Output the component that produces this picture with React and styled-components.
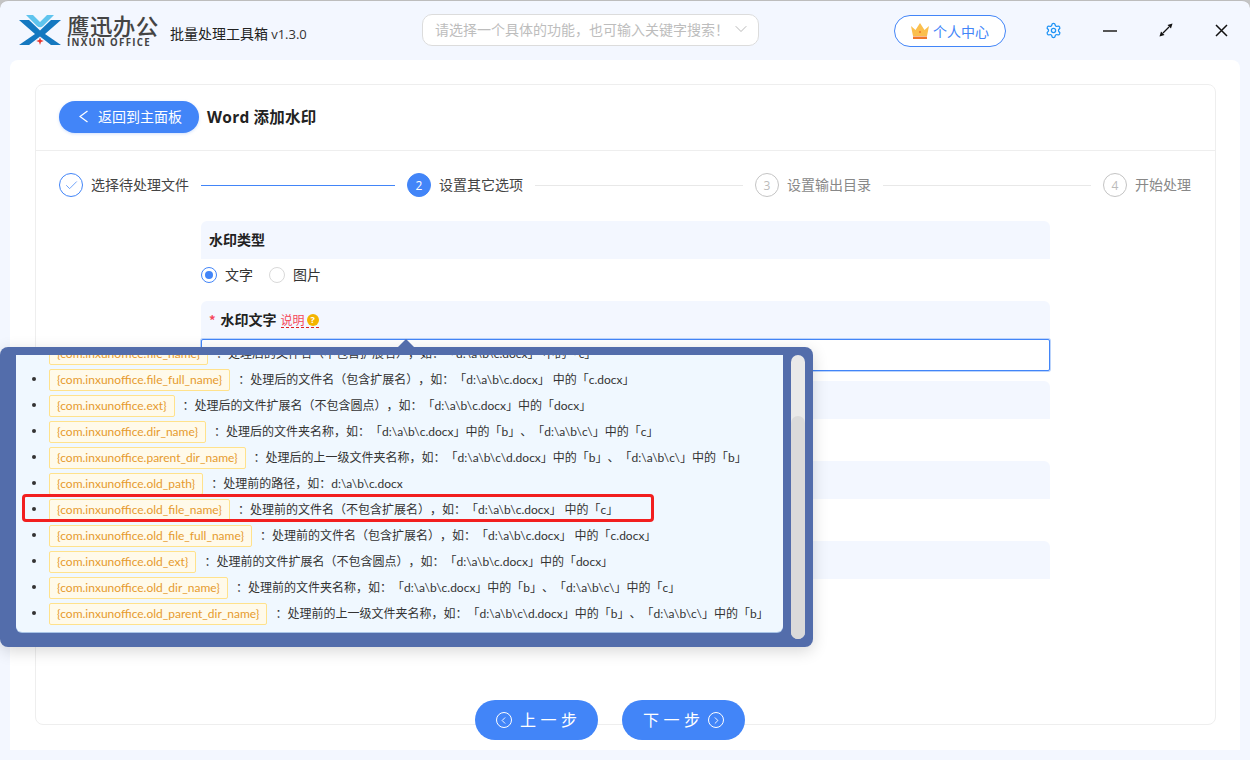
import React from 'react';
import styled, { createGlobalStyle } from 'styled-components';
import { Check, ChevronDown, ChevronRight, ChevronLeft, Settings } from 'lucide-react';

const Global = createGlobalStyle`
  html, body { margin: 0; padding: 0; background: #c4c4c4; }
  body { font-family: "Open Sans", "Noto Sans CJK SC", sans-serif; overflow: hidden; text-spacing-trim: space-all; }
  *, *::before, *::after { box-sizing: border-box; }
`;

const Win = styled.div`
  position: relative; width: 1250px; height: 760px; background: #f3f7ff;
  border-radius: 8px 8px 0 0; border-top: 1px solid #bdbdbd; display: flex; flex-direction: column; overflow: hidden;
`;
const TopBar = styled.header`height: 59px; display: flex; align-items: flex-start; flex: none; position: relative;`;
const LogoWrap = styled.div`display: flex; margin: 13px 0 0 18px; width: 152px; flex: none;`;
const LogoText = styled.div`margin-left: 5px; display: flex; flex-direction: column; color: #444;`;
const LogoCn = styled.span`font: 500 22.5px/23px "Noto Sans CJK SC", sans-serif; letter-spacing: 0.4px; white-space: nowrap;`;
const LogoEn = styled.span`font: 700 9.7px/9px "Open Sans", sans-serif; letter-spacing: 1.3px; white-space: nowrap; margin-top: 1px;`;
const AppName = styled.span`margin-top: 23px; font: 400 14px/18px "Noto Sans CJK SC", sans-serif; color: #222; width: 252px; flex: none; white-space: nowrap;
  & b { font: 400 13px "Open Sans", sans-serif; color: #333; }`;
const Search = styled.div`
  width: 337px; height: 32px; margin-top: 13px; border: 1px solid #dcdcdc; border-radius: 10px; background: #fff;
  display: flex; align-items: center; justify-content: space-between; padding: 0 7px 2px 12px; color: #bdbdbd;
  font: 400 14px "Noto Sans CJK SC", sans-serif; flex: none;
`;
const Person = styled.button`
  margin: 14px 0 0 135px; width: 112px; height: 32px; border: 1px solid #4285f8; border-radius: 16px; background: #fff;
  display: flex; align-items: center; gap: 3px; padding: 0 0 1px 15px; color: #4285f8; font: 400 14px "Noto Sans CJK SC", sans-serif; flex: none;
`;
const IconBtn = styled.span`position: absolute; top: ${p => p.$top}px; left: ${p => p.$x}px; display: flex; color: ${p => p.$c || '#111'};`;

const Card = styled.main`
  flex: none; margin: 0 10px; height: 690px; background: #fff; border-radius: 8px 8px 0 0; padding: 24px 24px 0 25px; position: relative;
`;
const Panel = styled.section`height: 641px; border: 1px solid #eee; border-radius: 8px; display: flex; flex-direction: column;`;
const PanelHead = styled.div`height: 66px; flex: none; border-bottom: 1px solid #eee; display: flex; align-items: center; padding: 0 0 1px 23px; gap: 8px;`;
const Back = styled.button`
  width: 140px; height: 32px; border: 0; border-radius: 16px; background: #4285f8; color: #fff; display: flex; align-items: center;
  padding: 0 0 2px 20px; gap: 10px; font: 400 14px "Noto Sans CJK SC", sans-serif; box-shadow: 0 1px 3px rgba(66,133,248,.25);
`;
const Title = styled.h1`margin: 0 0 2px; font: 700 15.5px "Noto Sans CJK SC", sans-serif; color: #222; letter-spacing: .3px; white-space: nowrap; & span { font-family: "Open Sans", sans-serif; font-weight: 700; }`;
const Steps = styled.div`height: 70px; flex: none; display: flex; align-items: center; padding: 0 0 2px 23px;`;
const Dot = styled.span`
  width: 24px; height: 24px; border-radius: 50%; flex: none; display: flex; align-items: center; justify-content: center; font: 400 12px "Open Sans", sans-serif;
  color: ${p => p.$s === 'active' ? '#fff' : p.$s === 'done' ? '#4285f8' : '#bbb'};
  background: ${p => p.$s === 'active' ? '#4285f8' : '#fff'};
  border: 1px solid ${p => p.$s === 'todo' ? '#c4c4c4' : '#4285f8'};
`;
const StepLabel = styled.span`margin: 0 12px 2px 8px; font: 400 14px "Noto Sans CJK SC", sans-serif; white-space: nowrap; color: ${p => p.$dim ? '#888' : '#444'};`;
const Line = styled.span`width: ${p => p.$w}px; height: 1px; flex: none; margin-right: 12px; background: ${p => p.$on ? '#4285f8' : '#e8e8e8'};`;
const Form = styled.div`margin-left: 165px; width: 849px; display: flex; flex-direction: column;`;
const SecHead = styled.div`
  height: 38px; background: #f3f7ff; border-radius: 6px 6px 0 0; padding: 0 8px 2px; display: flex; align-items: center;
  font: 700 14px "Noto Sans CJK SC", sans-serif; color: #222; margin-top: ${p => p.$mt || 0}px;
`;
const Radios = styled.div`height: 42px; display: flex; align-items: center; padding-bottom: 10px; font: 400 14px "Noto Sans CJK SC", sans-serif; color: #333;`;
const Radio = styled.span`
  width: 16px; height: 16px; border-radius: 50%; margin-right: 8px; flex: none; background: #fff;
  border: 1px solid ${p => p.$on ? '#4285f8' : '#d9d9d9'}; display: flex; align-items: center; justify-content: center;
  &::after { content: ''; width: 8px; height: 8px; border-radius: 50%; background: ${p => p.$on ? '#4285f8' : 'transparent'}; }
`;
const RadioText = styled.span`margin-right: 16px; margin-bottom: 2px;`;
const Star = styled.span`color: #f5475a; margin-right: 5px; font-weight: 700; font-size: 13px;`;
const Explain = styled.span`
  margin-left: 4px; color: #f5475a; font-weight: 400; font-size: 12px; line-height: 15px; border-bottom: 1px dashed #e02020; display: flex; align-items: center; gap: 2px; margin-top: 2px;
`;
const Hint = styled.i`width: 12px; height: 12px; border-radius: 50%; background: #f4b400; color: #fff; font: 700 9px/12px "Open Sans", sans-serif; text-align: center; display: block;`;
const Input = styled.div`height: 32px; border: 1px solid #4285f8; box-shadow: 0 0 0 1px #bcd4fb; border-radius: 2px; background: #fff; flex: none;`;

const Pop = styled.div`
  position: absolute; left: 0; top: 346px; width: 813px; height: 300px; background: #536dab; border-radius: 8px;
  padding: 8px 8px 15px 16px; display: flex; gap: 8px; box-shadow: 0 4px 16px rgba(0,0,0,.16);
  &::before { content: ''; position: absolute; left: 398px; top: -8px; width: 0; height: 0; border: 8px solid transparent; border-top: 0; border-bottom-color: #536dab; }
`;
const Scroll = styled.div`width: 767px; height: 277px; flex: none; background: #f0f8ff; border-radius: 0 0 6px 6px; overflow: hidden; box-shadow: 0 1px 0 #a9c4e6;`;
const List = styled.ul`margin: -15px 0 0; padding: 0 0 0 33px; list-style: none; color: #333; font: 400 12px/26px Lato, "Noto Sans CJK SC", sans-serif;`;
const Row = styled.li`
  height: 26px; white-space: nowrap; position: relative;
  &::before { content: ''; position: absolute; left: -17px; top: 11px; width: 4px; height: 4px; border-radius: 50%; background: #333; }
  &::after { content: ${p => p.$mark ? "''" : 'none'}; position: absolute; left: -27px; top: -2px; width: 632px; height: 28px; border: 3px solid #f21f1f; border-radius: 4px; }
`;
const Tag = styled.span`
  display: inline-block; height: 22px; line-height: 20px; padding: 0 7px; margin-right: 8px; background: #fffaea; border: 1px solid #ffe28c; border-radius: 2px; color: #e69a2e; vertical-align: middle;
`;
const Desc = styled.span`vertical-align: middle; color: #333;`;
const Track = styled.div`width: 14px; height: 284px; flex: none; border-radius: 7px; background: #e9e9e9; padding-top: 61px; display: flex;`;
const Thumb = styled.div`width: 14px; height: 223px; border-radius: 7px; background: #dadada;`;
const Foot = styled.div`position: absolute; left: 465px; top: 640px; display: flex; gap: 24px;`;
const FootBtn = styled.button`
  width: 123px; height: 40px; border: 0; border-radius: 20px; background: #4285f8; color: #fff; display: flex; align-items: center; justify-content: center; gap: 8px;
  font: 400 16px "Noto Sans CJK SC", sans-serif; letter-spacing: 4.5px;
`;
const FootText = styled.span`margin: 0 -4.5px 2px 0;`;
const Ring = styled.span`width: 16px; height: 16px; border-radius: 50%; border: 1.5px solid #fff; display: flex; align-items: center; justify-content: center; flex: none;`;

const Logo = () => (
  <svg width="44" height="32" viewBox="0 0 44 32">
    <path d="M1 6h10l11 10.5L33 6h10L27 20l16 11H33L22 22.5 11 31H1l16-11z" fill="#1478c0"/>
    <path d="M8 1h7l7 7 7-7h7L25 12c-2 1.6-4 1.6-6 0z" fill="#5fc4ee"/>
    <path d="M22 23.5l1 2.4 2.8 1.1-2.8 1.1-1 2.9-1-2.9-2.8-1.1 2.8-1.1z" fill="#e8352e"/>
  </svg>
);
const Crown = () => (
  <svg width="20" height="20" viewBox="0 0 20 20">
    <path d="M1 5l4.5 4L10 2l4.5 7L19 5l-2 10H3z" fill="#fbbf4d"/>
    <rect x="3" y="15.5" width="14" height="2.5" fill="#f0762a"/>
    <circle cx="10" cy="11" r="1" fill="#f0762a"/>
  </svg>
);
const Minus = () => <svg width="14" height="2"><rect width="14" height="2" fill="#555"/></svg>;
const Expand = () => (
  <svg width="14" height="14" viewBox="0 0 14 14" fill="none" stroke="#111" strokeWidth="1.2">
    <path d="M4 10l6-6"/>
    <path d="M13.5.5L8.5 2 12 5.5z" fill="#111" stroke="none"/>
    <path d="M.5 13.5l5-1.5L2 8.5z" fill="#111" stroke="none"/>
  </svg>
);
const Close = () => (
  <svg width="13" height="13" viewBox="0 0 13 13" stroke="#111" strokeWidth="1.5"><path d="M1 1l11 11M12 1L1 12"/></svg>
);
const BackArrow = () => (
  <svg width="9" height="13" viewBox="0 0 9 13" fill="none" stroke="#fff" strokeWidth="1.3"><path d="M8.5 1L1 6.5 8.5 12"/></svg>
);

const rows = [
  ['{com.inxunoffice.file_name}', '：处理后的文件名（不包含扩展名），如：「d:\\a\\b\\c.docx」 中的「c」'],
  ['{com.inxunoffice.file_full_name}', '：处理后的文件名（包含扩展名），如：「d:\\a\\b\\c.docx」 中的「c.docx」'],
  ['{com.inxunoffice.ext}', '：处理后的文件扩展名（不包含圆点），如：「d:\\a\\b\\c.docx」中的「docx」'],
  ['{com.inxunoffice.dir_name}', '：处理后的文件夹名称，如：「d:\\a\\b\\c.docx」中的「b」、「d:\\a\\b\\c\\」中的「c」'],
  ['{com.inxunoffice.parent_dir_name}', '：处理后的上一级文件夹名称，如：「d:\\a\\b\\c\\d.docx」中的「b」、「d:\\a\\b\\c\\」中的「b」'],
  ['{com.inxunoffice.old_path}', '：处理前的路径，如：d:\\a\\b\\c.docx'],
  ['{com.inxunoffice.old_file_name}', '：处理前的文件名（不包含扩展名），如：「d:\\a\\b\\c.docx」 中的「c」', true],
  ['{com.inxunoffice.old_file_full_name}', '：处理前的文件名（包含扩展名），如：「d:\\a\\b\\c.docx」 中的「c.docx」'],
  ['{com.inxunoffice.old_ext}', '：处理前的文件扩展名（不包含圆点），如：「d:\\a\\b\\c.docx」中的「docx」'],
  ['{com.inxunoffice.old_dir_name}', '：处理前的文件夹名称，如：「d:\\a\\b\\c.docx」中的「b」、「d:\\a\\b\\c\\」中的「c」'],
  ['{com.inxunoffice.old_parent_dir_name}', '：处理前的上一级文件夹名称，如：「d:\\a\\b\\c\\d.docx」中的「b」、「d:\\a\\b\\c\\」中的「b」'],
];

export default function App() {
  return (
    <Win>
      <Global />
      <TopBar>
        <LogoWrap>
          <Logo />
          <LogoText>
            <LogoCn>鹰迅办公</LogoCn>
            <LogoEn>INXUN OFFICE</LogoEn>
          </LogoText>
        </LogoWrap>
        <AppName>批量处理工具箱 <b>v1.3.0</b></AppName>
        <Search>请选择一个具体的功能，也可输入关键字搜索！<ChevronDown size={20} strokeWidth={1} color="#aaa" /></Search>
        <Person><Crown />个人中心</Person>
        <IconBtn $x={1045} $top={21} $c="#1f93f5"><Settings size={17} strokeWidth={1.8} /></IconBtn>
        <IconBtn $x={1103} $top={29}><Minus /></IconBtn>
        <IconBtn $x={1159} $top={22}><Expand /></IconBtn>
        <IconBtn $x={1215} $top={23}><Close /></IconBtn>
      </TopBar>
      <Card>
        <Panel>
          <PanelHead>
            <Back><BackArrow />返回到主面板</Back>
            <Title><span>Word</span> 添加水印</Title>
          </PanelHead>
          <Steps>
            <Dot $s="done"><Check size={15} strokeWidth={1.2} /></Dot>
            <StepLabel>选择待处理文件</StepLabel>
            <Line $on $w={194} />
            <Dot $s="active">2</Dot>
            <StepLabel>设置其它选项</StepLabel>
            <Line $w={208} />
            <Dot $s="todo">3</Dot>
            <StepLabel $dim>设置输出目录</StepLabel>
            <Line $w={208} />
            <Dot $s="todo">4</Dot>
            <StepLabel $dim>开始处理</StepLabel>
          </Steps>
          <Form>
            <SecHead>水印类型</SecHead>
            <Radios>
              <Radio $on /><RadioText>文字</RadioText>
              <Radio /><RadioText>图片</RadioText>
            </Radios>
            <SecHead><Star>*</Star>水印文字<Explain>说明<Hint>?</Hint></Explain></SecHead>
            <Input />
            <SecHead $mt={10} />
            <SecHead $mt={42} />
            <SecHead $mt={42} />
          </Form>
        </Panel>
        <Foot>
          <FootBtn><Ring><ChevronLeft size={11} strokeWidth={2} /></Ring><FootText>上一步</FootText></FootBtn>
          <FootBtn><FootText>下一步</FootText><Ring><ChevronRight size={11} strokeWidth={2} /></Ring></FootBtn>
        </Foot>
      </Card>
      <Pop>
        <Scroll>
          <List>
            {rows.map(([t, d, m]) => (
              <Row key={t} $mark={m}><Tag>{t}</Tag><Desc>{d}</Desc></Row>
            ))}
          </List>
        </Scroll>
        <Track><Thumb /></Track>
      </Pop>
    </Win>
  );
}
